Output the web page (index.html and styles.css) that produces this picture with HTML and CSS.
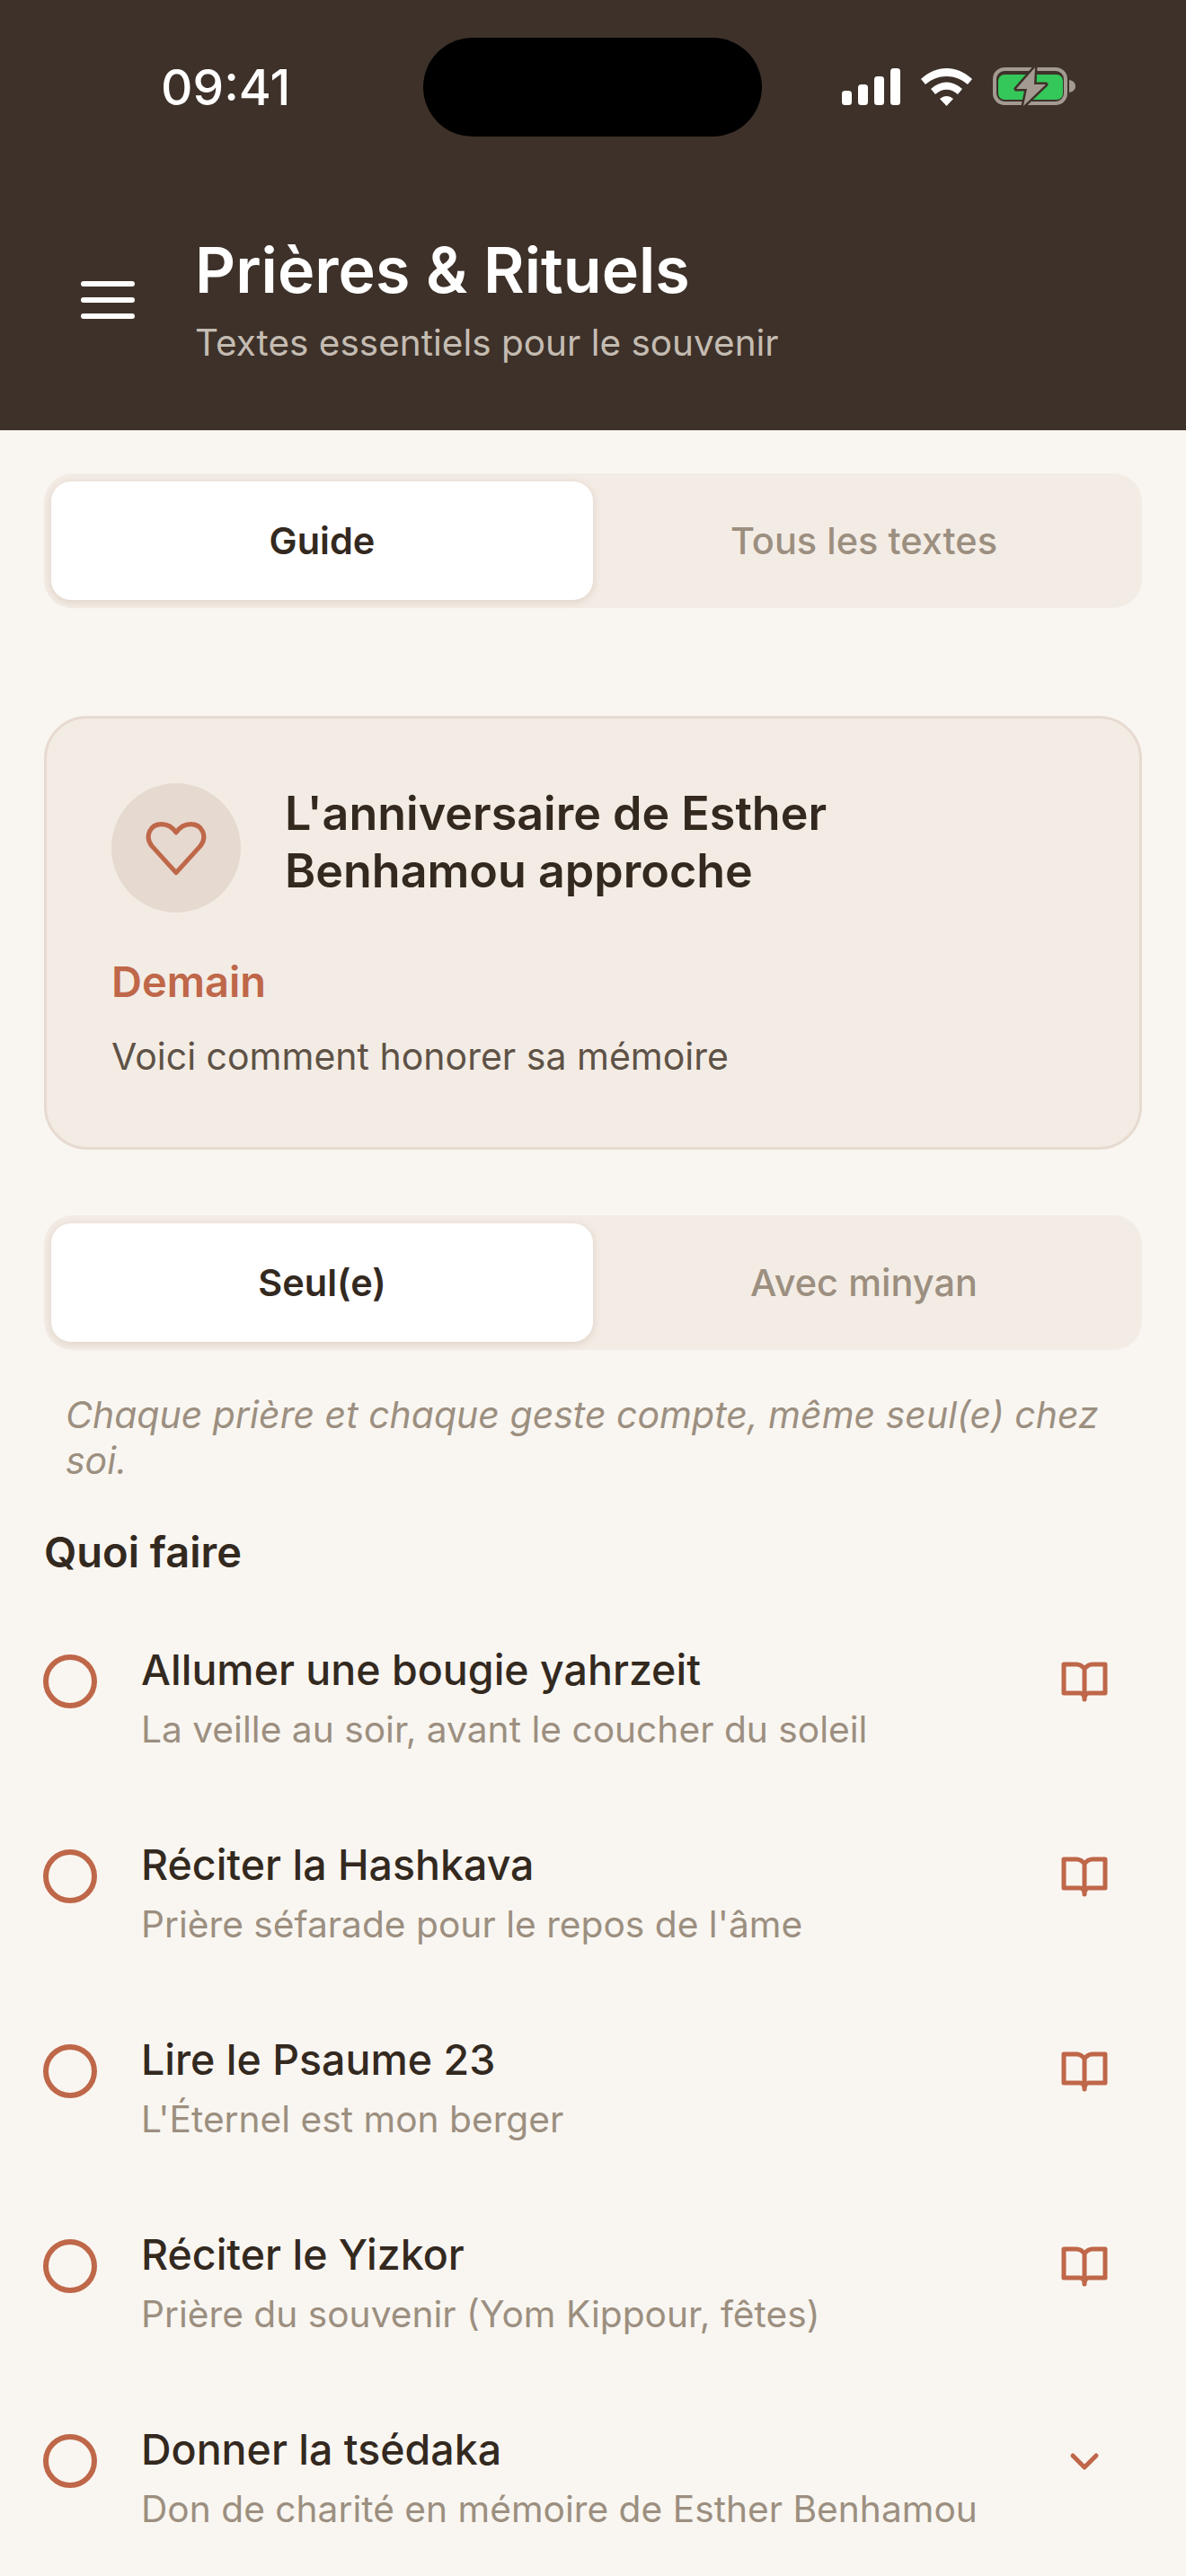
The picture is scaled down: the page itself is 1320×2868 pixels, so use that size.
FILE: index.html
```html
<!DOCTYPE html>
<html lang="fr">
<head>
<meta charset="UTF-8">
<meta name="viewport" content="width=device-width, initial-scale=1.0">
<title>Prières &amp; Rituels</title>
<link rel="stylesheet" href="styles.css">
</head>
<body>

<header class="top">
  <div class="status">
    <span class="time">09:41</span>
    <div class="island"></div>
    <div class="status-icons">
      <svg width="66" height="42" viewBox="0 0 66 42" class="signal">
        <rect x="0" y="25" width="11" height="16" rx="3.5"/>
        <rect x="18" y="18" width="11" height="23" rx="3.5"/>
        <rect x="36" y="9" width="11" height="32" rx="3.5"/>
        <rect x="54" y="0" width="11" height="41" rx="3.5"/>
      </svg>
      <svg width="58" height="42" viewBox="0 0 58 42" class="wifi">
        <path d="M0 12 C17 -4 40 -4 57 12 L52 18 C38 6 19 6 5 18 Z"/>
        <path d="M11 23 C22 13 35 13 46 23 L41 29 C33 22 24 22 16 29 Z"/>
        <path d="M21 34 C26 30 31 30 36 34 L28.500 42 Z"/>
      </svg>
      <svg width="94" height="46" viewBox="0 0 94 46" class="battery">
        <rect x="2" y="3" width="79" height="38" rx="11" fill="none" stroke="#a39b91" stroke-width="4"/>
        <path d="M85 15 C90 16 92 19 92 22 C92 25 90 28 85 29 Z" fill="#a39b91"/>
        <rect x="6" y="9" width="72" height="28" rx="7" fill="#34c759"/>
        <path d="M47 1 L26 25 H38 L34 44 L59 20 H46 Z" fill="#a39b91" stroke="#3d3129" stroke-width="5" stroke-linejoin="round" paint-order="stroke"/>
      </svg>
    </div>
  </div>
  <div class="title-row">
    <svg class="menu" width="60" height="60" viewBox="0 0 60 60">
      <path d="M3 12 H57 M3 30 H57 M3 48 H57" fill="none" stroke="#fff" stroke-width="6" stroke-linecap="round"/>
    </svg>
    <div>
      <h1>Prières &amp; Rituels</h1>
      <p class="sub">Textes essentiels pour le souvenir</p>
    </div>
  </div>
</header>

<main class="content">
  <div class="tabs">
    <div class="tab active">Guide</div>
    <div class="tab">Tous les textes</div>
  </div>

  <section class="card">
    <div class="card-head">
      <div class="heart-wrap">
        <svg width="72" height="72" viewBox="0 0 24 24" fill="none" stroke="#bf6749" stroke-width="1.700" stroke-linejoin="round">
          <path d="M12 21.200 L3 11.300 C0.200 7.600 2.400 3.200 6.600 3.200 C8.800 3.200 10.700 4.400 12 6.300 C13.300 4.400 15.200 3.200 17.400 3.200 C21.600 3.200 23.800 7.600 21 11.300 Z"/>
        </svg>
      </div>
      <h2>L'anniversaire de Esther Benhamou approche</h2>
    </div>
    <div class="when">Demain</div>
    <p class="honor">Voici comment honorer sa mémoire</p>
  </section>

  <div class="tabs">
    <div class="tab active">Seul(e)</div>
    <div class="tab">Avec minyan</div>
  </div>

  <p class="note">Chaque prière et chaque geste compte, même seul(e) chez soi.</p>

  <h3>Quoi faire</h3>

  <ul class="steps">
    <li class="step">
      <span class="ring"></span>
      <div class="step-text">
        <div class="step-title">Allumer une bougie yahrzeit</div>
        <div class="step-sub">La veille au soir, avant le coucher du soleil</div>
      </div>
      <svg class="book" width="54" height="54" viewBox="0 0 54 54"><path d="M27 14 C24 10 21 9 18 9 H4 V41 H22 C25 41 27 43 27 48 C27 43 29 41 32 41 H50 V9 H36 C33 9 30 10 27 14 Z M27 14 V48"/></svg>
    </li>
    <li class="step">
      <span class="ring"></span>
      <div class="step-text">
        <div class="step-title">Réciter la Hashkava</div>
        <div class="step-sub">Prière séfarade pour le repos de l'âme</div>
      </div>
      <svg class="book" width="54" height="54" viewBox="0 0 54 54"><path d="M27 14 C24 10 21 9 18 9 H4 V41 H22 C25 41 27 43 27 48 C27 43 29 41 32 41 H50 V9 H36 C33 9 30 10 27 14 Z M27 14 V48"/></svg>
    </li>
    <li class="step">
      <span class="ring"></span>
      <div class="step-text">
        <div class="step-title">Lire le Psaume 23</div>
        <div class="step-sub">L'Éternel est mon berger</div>
      </div>
      <svg class="book" width="54" height="54" viewBox="0 0 54 54"><path d="M27 14 C24 10 21 9 18 9 H4 V41 H22 C25 41 27 43 27 48 C27 43 29 41 32 41 H50 V9 H36 C33 9 30 10 27 14 Z M27 14 V48"/></svg>
    </li>
    <li class="step">
      <span class="ring"></span>
      <div class="step-text">
        <div class="step-title">Réciter le Yizkor</div>
        <div class="step-sub">Prière du souvenir (Yom Kippour, fêtes)</div>
      </div>
      <svg class="book" width="54" height="54" viewBox="0 0 54 54"><path d="M27 14 C24 10 21 9 18 9 H4 V41 H22 C25 41 27 43 27 48 C27 43 29 41 32 41 H50 V9 H36 C33 9 30 10 27 14 Z M27 14 V48"/></svg>
    </li>
    <li class="step">
      <span class="ring"></span>
      <div class="step-text">
        <div class="step-title">Donner la tsédaka</div>
        <div class="step-sub">Don de charité en mémoire de Esther Benhamou</div>
      </div>
      <svg class="book" width="54" height="54" viewBox="0 0 54 54"><path d="M14 22 L27 35 L40 22"/></svg>
    </li>
  </ul>
</main>

</body>
</html>
```

FILE: styles.css
```css
html, body {
  margin: 0;
  padding: 0;
}

body {
  width: 1320px;
  height: 2868px;
  overflow: hidden;
  background-color: #f9f6f1;
  font-family: Inter, "Liberation Sans", sans-serif;
  font-optical-sizing: none;
  color: #33291f;
}

.top {
  height: 479px;
  background-color: #3d3129;
  color: #fff;
  box-sizing: border-box;
  padding-top: 42px;
}

.status {
  display: flex;
  height: 110px;
  align-items: center;
  padding-left: 179px;
}

.time {
  width: 292px;
  font-size: 55px;
  font-weight: 500;
}

.island {
  width: 377px;
  height: 110px;
  border-radius: 55px;
  background-color: #000;
}

.status-icons {
  display: flex;
  align-items: flex-start;
  height: 46px;
  margin-left: 89px;
  margin-top: 4px;
  gap: 22px;
}

.battery {
  margin-top: -2px;
}

.signal, .wifi {
  fill: #fff;
}

.title-row {
  display: flex;
  align-items: flex-start;
  margin-top: 117px;
  padding-left: 90px;
}

.menu {
  margin-top: 35px;
  margin-right: 67px;
}

h1 {
  margin: 0;
  font-size: 70px;
  line-height: 64px;
  font-weight: 600;
}

.sub {
  margin: 26px 0 0;
  font-size: 40.5px;
  line-height: 46px;
  color: #c4bcb2;
}

.content {
  padding: 48px 49px 0;
}

.tabs {
  display: flex;
  height: 150px;
  box-sizing: border-box;
  padding: 9px 8px;
  border-radius: 32px;
  background-color: #f3ece5;
}

.tab {
  flex: 1;
  display: flex;
  align-items: center;
  justify-content: center;
  border-radius: 22px;
  font-size: 41.5px;
  font-weight: 500;
  color: #9c8f80;
}

.tab.active {
  background-color: #fff;
  color: #33291f;
  font-weight: 600;
  box-shadow: 0 2px 10px rgba(110, 70, 40, 0.16);
}

.card {
  margin-top: 120px;
  margin-bottom: 73px;
  height: 483px;
  box-sizing: border-box;
  padding: 72px 72px 0;
  border: 3px solid #e7dad0;
  border-radius: 48px;
  background-color: #f3ece5;
}

.card-head {
  display: flex;
  gap: 49px;
}

.heart-wrap {
  flex: none;
  width: 144px;
  height: 144px;
  border-radius: 50%;
  background-color: #e6d9cf;
  display: flex;
  align-items: center;
  justify-content: center;
}

h2 {
  margin: 2px 0 0;
  max-width: 760px;
  font-size: 52px;
  line-height: 64px;
  font-weight: 600;
}

.when {
  margin-top: 47px;
  font-size: 47px;
  line-height: 60px;
  font-weight: 600;
  color: #bf6749;
}

.honor {
  margin: 29px 0 0;
  font-size: 41px;
  line-height: 48px;
  color: #5e5246;
}

.note {
  margin: 47px 24px 0;
  font-size: 41px;
  line-height: 51px;
  font-style: italic;
  color: #9c8f80;
}

h3 {
  margin: 48px 0 0;
  font-size: 47px;
  line-height: 56px;
  font-weight: 600;
}

.steps {
  list-style: none;
  margin: 75px 0 0;
  padding: 0;
}

.step {
  display: flex;
  align-items: flex-start;
  height: 217px;
}

.ring {
  flex: none;
  width: 60px;
  height: 60px;
  box-sizing: border-box;
  margin-top: 11px;
  margin-left: -1px;
  border: 6px solid #bf6749;
  border-radius: 50%;
}

.step-text {
  flex: 1;
  margin-left: 49px;
}

.step-title {
  font-size: 46.5px;
  line-height: 56px;
  font-weight: 500;
}

.step-sub {
  margin-top: 15px;
  font-size: 40.7px;
  line-height: 48px;
  color: #9c8f80;
}

.book {
  flex: none;
  margin-top: 13px;
  margin-right: 37px;
  fill: none;
  stroke: #bf6749;
  stroke-width: 5;
  stroke-linejoin: round;
  stroke-linecap: round;
}
```
